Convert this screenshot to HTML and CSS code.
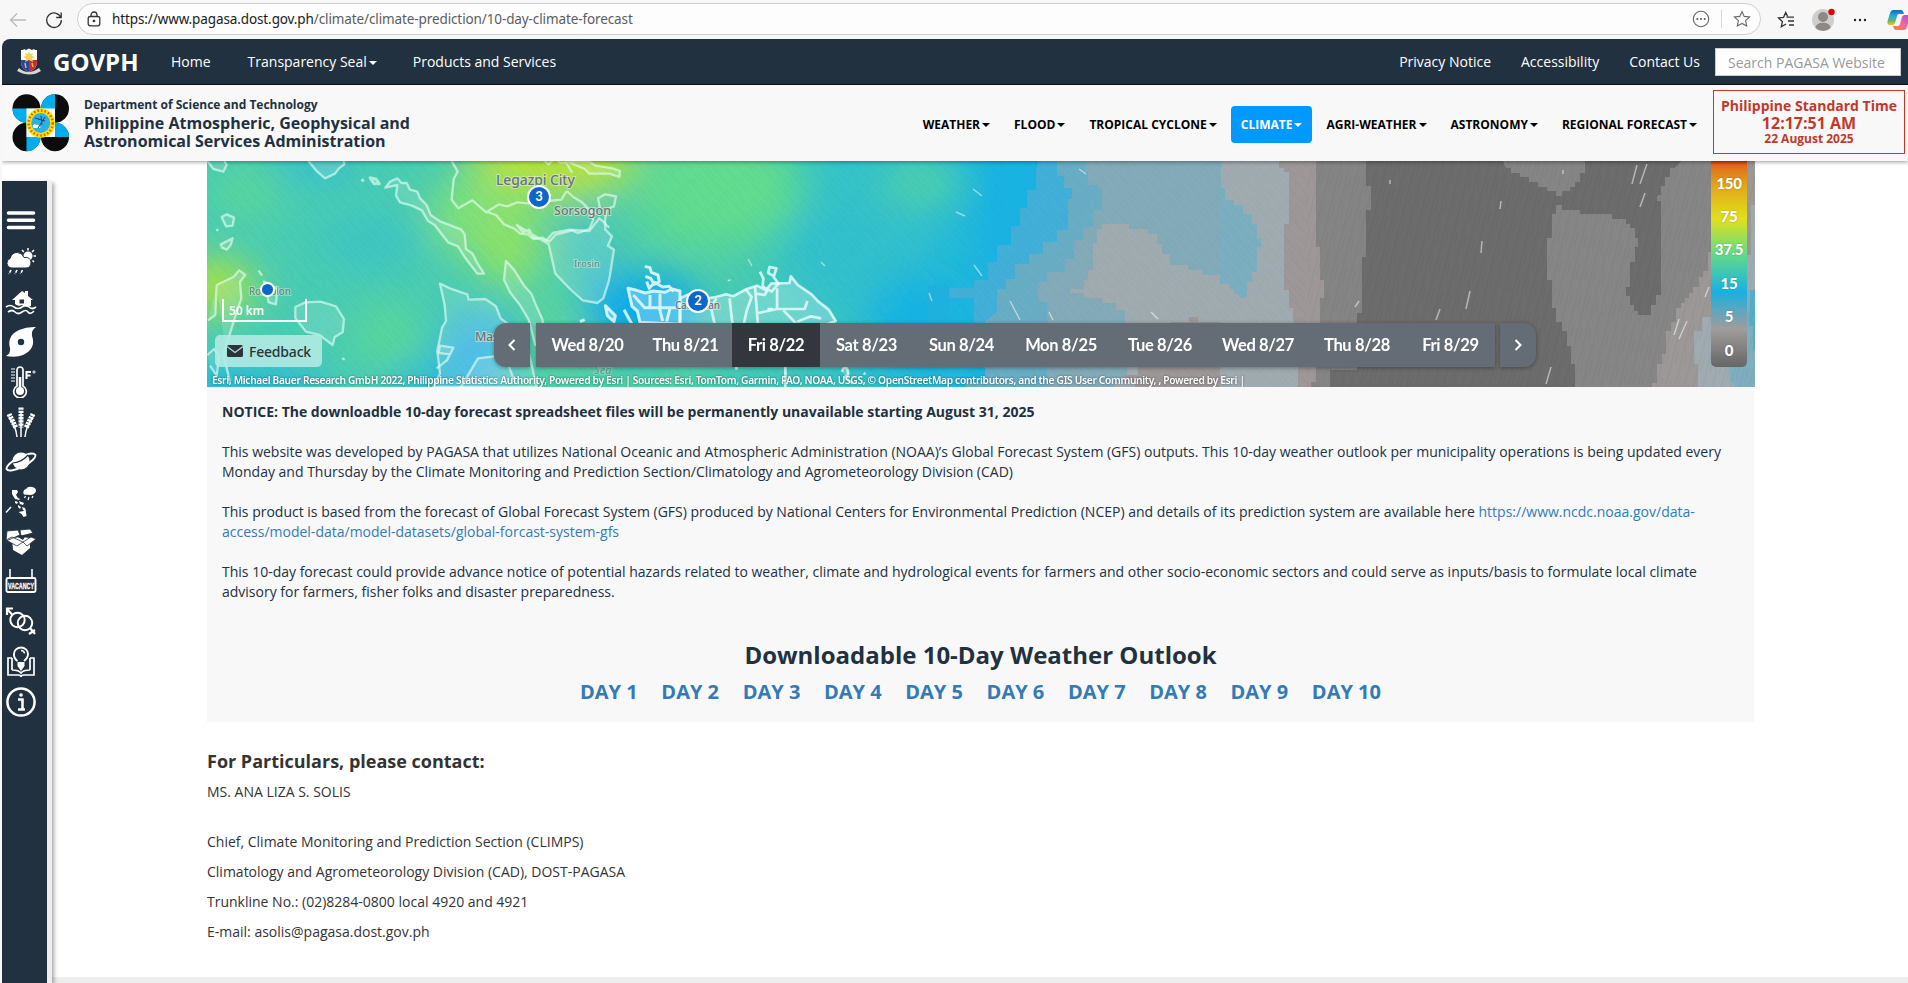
FILE: index.html
```html
<!DOCTYPE html>
<html lang="en">
<head>
<meta charset="utf-8">
<title>PAGASA</title>
<link rel="stylesheet" href="styles.css">
</head>
<body>
<div class="browser">
  <svg class="ico back" width="18" height="18" viewBox="0 0 18 18"><path d="M17 9H1.500M8 2.500 1.500 9 8 15.500"/></svg>
  <svg class="ico reload" width="18" height="18" viewBox="0 0 18 18"><path d="M15.800 6.500A7.300 7.300 0 1 0 16.300 9M16.200 1.500v5h-5"/></svg>
  <div class="address">
    <svg class="ico lock" width="14" height="16" viewBox="0 0 14 16"><rect x="1.200" y="5.500" width="11.600" height="9.300" rx="2"/><path d="M4 5.500V4a3 3 0 0 1 6 0v1.500"/><circle cx="7" cy="10" r=".7" fill="#333"/></svg>
    <span class="url">https://www.pagasa.dost.gov.ph<span>/climate/climate-prediction/10-day-climate-forecast</span></span>
    <svg class="ico more" width="18" height="18" viewBox="0 0 18 18"><circle cx="9" cy="9" r="7.700"/><g fill="#555" stroke="none"><circle cx="5.300" cy="9" r="1"/><circle cx="9" cy="9" r="1"/><circle cx="12.700" cy="9" r="1"/></g></svg>
    <i class="sep"></i>
    <svg class="ico star" width="18" height="18" viewBox="0 0 18 18"><path d="m9 1.500 2.200 4.900 5.400.6-4 3.700 1.100 5.300L9 13.400 4.300 16l1.100-5.300-4-3.700 5.400-.6z"/></svg>
  </div>
  <svg class="ico fav" width="18" height="18" viewBox="0 0 18 18"><path d="M9.500 6.200H17M11 10h6M12 14h5M9 13 4.300 15.800l1.100-5.200-4-3.700 5.200-.6L8.700 1.500l1.800 3.700"/></svg>
  <svg class="avatar" width="26" height="26" viewBox="0 0 26 26"><circle cx="12" cy="14" r="11" fill="#d0cecc"/><circle cx="12" cy="11" r="5" fill="#8e8987"/><path d="M4.500 22c0-7 15-7 15 0a11 11 0 0 1-15 0" fill="#8e8987"/><circle cx="20.500" cy="6" r="3.200" fill="#e60000"/></svg>
  <svg class="dots" width="14" height="4" viewBox="0 0 14 4"><circle cx="2" cy="2" r="1.200"/><circle cx="7" cy="2" r="1.200"/><circle cx="12" cy="2" r="1.200"/></svg>
  <svg class="copilot" width="23" height="22" viewBox="0 0 23 22"><defs><linearGradient id="ca" x1="0" y1="0" x2="0" y2="1"><stop offset="0" stop-color="#1269c7"/><stop offset=".4" stop-color="#25a9e0"/><stop offset=".7" stop-color="#5cb86a"/><stop offset="1" stop-color="#f6c32c"/></linearGradient><linearGradient id="cb" x1="1" y1="0" x2="0" y2="1"><stop offset="0" stop-color="#a44de8"/><stop offset=".5" stop-color="#f06a9c"/><stop offset="1" stop-color="#f7812f"/></linearGradient></defs><path d="M6 1h8q2 0 3 4h-5q-1.500 0-2 2L8 14q-.6 2-2.500 2H2.500Q-.4 16 .6 12L3 4Q4 1 6 1" fill="url(#ca)"/><path d="M17 21H9q-2 0-3-4h5q1.500 0 2-2l2-7q.6-2 2.500-2h3q3 0 2 4l-2.500 8q-1 3-3 3" fill="url(#cb)"/></svg>
</div>

<div class="page">
  <nav class="topnav">
    <svg class="seal" width="26" height="27" viewBox="0 0 26 27"><path d="M3 20q9 8 20 0l2 3q-11 7-24 0z" fill="#d9d4d4"/><path d="M5 2h16v12q0 7-8 10-8-3-8-10z" fill="#fff"/><path d="M5 12h8v12q-8-3-8-10z" fill="#2446a5"/><path d="M13 12h8v2q0 7-8 10z" fill="#c92b35"/><path d="m13 3 1.200 3L17 5l-1 3 3 1-3 1.500L17 14l-4-2-4 2 1-3.500L7 9l3-1-1-3 2.800 1z" fill="#f4cf54"/><path d="m9 15 1 5M16 15l1 4" stroke="#e8b83a" stroke-width="1.500"/><path d="m5 4 3-3 2 1 3-1.500L16 2l2-1 3 3" fill="#fff"/></svg>
    <b class="gov">GOVPH</b>
    <a class="n1">Home</a><a class="n2">Transparency Seal<i class="caret"></i></a><a class="n3">Products and Services</a>
    <span class="grow"></span>
    <a class="n4">Privacy Notice</a><a class="n5">Accessibility</a><a class="n6">Contact Us</a>
    <div class="search">Search PAGASA Website</div>
  </nav>
  <header class="head">
    <svg class="logo" width="58" height="58" viewBox="0 0 58 58">
      <g fill="#0c0c0c"><ellipse cx="14.500" cy="14.500" rx="14" ry="14.300"/><ellipse cx="43" cy="14.500" rx="14" ry="14.300"/><ellipse cx="14.500" cy="43" rx="14" ry="14.300"/><ellipse cx="43" cy="43" rx="14" ry="14.300"/></g>
      <g fill="#00aeef"><path d="M.5 14.500h28a14 14.300 0 0 1-28 0M43 .2v28.600A14 14.300 0 0 1 43 .2M29 43h28a14 14.300 0 0 0-28 0M14.500 28.700v28.600a14 14.300 0 0 0 0-28.600"/></g>
      <path d="M14.500 14.500h28.500v28.500h-28.500z" fill="#fff"/>
      <ellipse cx="28.700" cy="29" rx="14.300" ry="14.800" fill="#ffe600"/><ellipse cx="28.700" cy="29" rx="12" ry="12.500" fill="none" stroke="#e4572a" stroke-width="2.600" stroke-dasharray="1.600 2"/><ellipse cx="28.700" cy="29" rx="9.500" ry="10" fill="#27b3e8"/><path d="M20.500 32q1.500-3 4-1 3-1 4 3h-7z" fill="#fff"/><path d="m23 24 10 3m-7 7 7-11m-4-1 1 9" stroke="#246" fill="none"/></svg>
    <div class="agency"><div class="dept">Department of Science and Technology</div><div class="name">Philippine Atmospheric, Geophysical and<br>Astronomical Services Administration</div></div>
    <div class="menu">
      <a>WEATHER<i class="caret"></i></a><a>FLOOD<i class="caret"></i></a><a>TROPICAL CYCLONE<i class="caret"></i></a><a class="on">CLIMATE<i class="caret"></i></a><a>AGRI-WEATHER<i class="caret"></i></a><a>ASTRONOMY<i class="caret"></i></a><a>REGIONAL FORECAST<i class="caret"></i></a>
    </div>
    <div class="pst"><div class="t1">Philippine Standard Time</div><div class="t2">12:17:51 AM</div><div class="t3">22 August 2025</div></div>
  </header>

  <div class="body">
    <aside class="side">
      <svg viewBox="0 0 32 32"><path d="M3.500 7h25M3.500 14.300h25M3.500 21.500h25" stroke-width="3.600" stroke-linecap="round"/></svg>
      <svg viewBox="0 0 32 32"><circle cx="23" cy="10" r="4.500" fill="#fff" stroke="none"/><path d="M23 2v2.500M17 4l1.800 2M29 4l-2 2M31 10h-2.500M29 16l-1.500-1.500" stroke-width="1.500"/><path d="M6 22a5 5 0 0 1-1-9.500Q7 6 12.500 6.500q5 .5 6.500 5 6-1 7 4.500 0 6-5 6z" fill="#fff" stroke="#22313f" stroke-width="1"/><path d="m6 24-2 4M12 24l-2 4M17.500 24l-2 4" stroke-width="1.600" stroke-dasharray="3 1"/></svg>
      <svg viewBox="0 0 32 32"><path d="m7 14 10-9 3 2V5h3v5l5 4h-2v6q-5 2-9-1-4 2-7-1v-4z" fill="#fff" stroke="none"/><path d="M14.500 13.500h4.500v4h-4.500z" fill="#22313f" stroke="none"/><path d="M1 21q4-3 8 0t8 0 7 0 7 0M3 26q4-3 7 0t7 0 6 0 6-1" stroke-width="1.700"/></svg>
      <svg viewBox="0 0 32 32"><path d="M31 1Q22 .5 14 4C5 8 3 15 5 22q1 5-4 8 10 2 17-1c9-4 12-11 9-19q-1-6 4-9" fill="#fff" stroke="none"/><circle cx="16" cy="16" r="3.200" fill="#22313f" stroke="none"/></svg>
      <svg viewBox="0 0 32 32"><path d="M12 20V4a3 3 0 0 1 6 0v16a6.300 6.300 0 1 1-6 0z" stroke-width="1.700"/><circle cx="15" cy="25" r="4" fill="#fff" stroke="none"/><path d="M15 11v12" stroke-width="2.600"/><path d="M6 3h4M6 6h4M6 9h4M6 12h4M6 15h4" stroke-width="1.200"/><path d="M21.500 13V6H26M21.500 9.500h4" stroke-width="2"/><circle cx="29" cy="6" r="1.100" stroke-width="1"/></svg>
      <svg viewBox="0 0 32 32"><path d="M16 5v26M4 11q7 9 8 20M28 11q-7 9-8 20" stroke-width="1.500"/><path d="M16 1.500v20M4 8l7 14M28 8l-7 14" stroke-width="5" stroke-dasharray="2.300 .9"/></svg>
      <svg viewBox="0 0 32 32"><ellipse cx="16" cy="15" rx="8.500" ry="8.500" fill="#fff" stroke="none"/><ellipse cx="16" cy="16" rx="16" ry="5" transform="rotate(-27 16 16)" stroke-width="1.900"/><path d="M8 17q9-1 15-8" stroke="#22313f" stroke-width="1.200"/></svg>
      <svg viewBox="0 0 32 32"><g fill="#fff" stroke="none"><path d="M7 4h5l1 2-2 3 2 3 2 1-1 1-4-1-3-5zM10 15l3 1-1 2-2-1zM14 15l5 2-1 2-3-1zM13 19l3 2-1 2-2-2zM17 21l3 1 1 3-3-1zM13.500 26l5-1 2-2 1 7-3 1-2-3z"/><path d="M19 8.500a3.500 3.500 0 0 1 2-5.500q2-3 6-2 4 .5 4 4-1 3-5 4z"/></g><path d="m1 26.500 5-5.500" stroke-width="1.500"/><path d="m20.500 10-1 2M24 11l-1 3M28 10l-1 2" stroke-width="1.200"/></svg>
      <svg viewBox="0 0 32 32"><path d="m7 12 9-1 9 1v10l-8 7-9-5z" fill="#fff" stroke="none"/><path d="m2 5 11-1 2 5-14 6zM15 4l10-1 3 4-12 3zM1 14l6-3 11 5-6 4zM18 16l8-5 5 2-9 7z" fill="#fff" stroke="#22313f" stroke-width=".8"/><path d="m11 10 10-1-3 5z" fill="#22313f" stroke="none"/></svg>
      <svg viewBox="0 0 32 32"><path d="M5 3v9M27 3v9" stroke-width="1.600"/><rect x="1.500" y="12" width="29" height="14" rx="1.500" stroke-width="1.900"/><text x="3" y="22.500" textLength="26" lengthAdjust="spacingAndGlyphs" class="vac">VACANCY</text></svg>
      <svg viewBox="0 0 32 32"><circle cx="12.500" cy="14" r="7.200" stroke-width="2"/><circle cx="20" cy="17" r="7.200" stroke-width="2"/><path d="M7.500 9 2 3M2 9V2.500H8M25 22l5 6M24 28l6-4" stroke-width="2.200"/></svg>
      <svg viewBox="0 0 32 32"><path d="M7 12H3v17h10q3 0 3 2 0-2 3-2h10V12h-4M7 24V12M25 24V12M7 24q7 0 9 3 2-3 9-3" stroke-width="1.700"/><path d="M12.500 15q-4-3-3.500-7a7 6.500 0 0 1 14 0q0 4-4 7" stroke-width="1.900"/><path d="M12.500 16h7v4l-3.500 5-3.500-5z" fill="#fff" stroke="none"/><path d="M16 4.500a3.500 3.500 0 0 1 3.500 3" stroke-width="1.400"/></svg>
      <svg viewBox="0 0 32 32"><circle cx="16" cy="16" r="13.600" stroke-width="2.500"/><path d="M13 13.500h4.500V23M13 23.500h7" stroke-width="2.600"/><circle cx="16" cy="9" r="1.800" fill="#fff" stroke="none"/></svg>
    </aside>

    <main class="main">
      <div class="map">
        <svg class="raster" width="1548" height="226" viewBox="0 0 1548 226">
          <defs>
            <linearGradient id="base"><stop offset="0" stop-color="#49ccb4"/><stop offset=".19" stop-color="#4acdb0"/><stop offset=".31" stop-color="#55d2a0"/><stop offset=".39" stop-color="#38c5c2"/><stop offset=".46" stop-color="#2fbfcf"/><stop offset=".51" stop-color="#19b3e2"/><stop offset="1" stop-color="#19b3e2"/></linearGradient>
            <filter id="soft" filterUnits="userSpaceOnUse" x="-80" y="-80" width="1100" height="390"><feGaussianBlur stdDeviation="19"/></filter>
            <pattern id="hatch" width="9" height="30" patternUnits="userSpaceOnUse" patternTransform="rotate(14)"><path d="M3 0v30M6.500 8v14" stroke="#000" stroke-opacity=".045"/></pattern>
            <pattern id="hatch2" width="9" height="30" patternUnits="userSpaceOnUse" patternTransform="rotate(-42)"><path d="M3 0v30M6.500 8v14" stroke="#046" stroke-opacity=".045"/></pattern>
          </defs>
          <rect width="1548" height="226" fill="url(#base)"/>
          <g filter="url(#soft)">
            <ellipse cx="345" cy="0" rx="85" ry="40" fill="#b4e23c"/><ellipse cx="270" cy="55" rx="50" ry="40" fill="#7fe07c"/><ellipse cx="302" cy="85" rx="36" ry="42" fill="#8de268"/>
            <ellipse cx="8" cy="125" rx="42" ry="28" fill="#a9e244"/><ellipse cx="40" cy="32" rx="36" ry="25" fill="#5cd79a"/><ellipse cx="110" cy="4" rx="45" ry="14" fill="#30bbd4"/>
            <ellipse cx="165" cy="80" rx="55" ry="28" fill="#3cc5c3"/><ellipse cx="180" cy="175" rx="34" ry="33" fill="#5ad79a"/>
            <ellipse cx="270" cy="190" rx="36" ry="40" fill="#38b4e8"/><ellipse cx="345" cy="170" rx="26" ry="40" fill="#5cd49c"/>
            <ellipse cx="385" cy="85" rx="28" ry="45" fill="#43c5bd"/><ellipse cx="440" cy="150" rx="62" ry="42" fill="#10abea"/>
            <ellipse cx="515" cy="28" rx="80" ry="55" fill="#62dc8e"/><ellipse cx="715" cy="22" rx="42" ry="26" fill="#50d0aa"/>
            <ellipse cx="565" cy="170" rx="35" ry="60" fill="#3ec8bb"/><ellipse cx="640" cy="90" rx="60" ry="50" fill="#30c0cc"/><ellipse cx="715" cy="165" rx="55" ry="55" fill="#19b3e2"/>
            <ellipse cx="30" cy="230" rx="90" ry="24" fill="#28b8dd"/><ellipse cx="230" cy="225" rx="50" ry="18" fill="#26b6df"/><ellipse cx="520" cy="222" rx="40" ry="16" fill="#40c9b8"/>
          </g>
          <g transform="matrix(.34435 0 0 .33333 473 -6)" shape-rendering="crispEdges">
            <path d="M1040 10h560v700H900v-170l-45-40V430h-75v70h-60v-110h60v10h75V375h40v-55h27v-50h38v-56h27v-56h20v-54h26V60z" fill="#42afd8"/>
            <path d="M720 390h60v110h-60z" fill="#1fb1de"/>
            <path d="M1095 10h480v700H830v-30h55V500l35-30v-68h27v-30h26v-46h40v-28h40v-38h42v-36h32v-92h11v-34h-22V64h-21z" fill="#69adc5"/>
            <path d="M1175 10h420v700H1065V440h-26v-60h26v-30h53v-38h26v-56h27v-40h28v-50h27v-65h-12V90h-28V50h-11z" fill="#83aab8"/>
            <path d="M1226 208h78v14h55v15h25v30h15v30h25v32h52v15h40v15h56v351h-310v-30h35v-70h-5V465h-27v-22h-40v-14h-53v-14h-40v-13h40v-28h13v-28h13V264h14v-42h12z" fill="#a0abb0"/>
            <path d="M1477 486h28v15h67v209h-252v-30h-30v-20h40v-120h95v-38h52z" fill="#9d9797"/>
          </g>
          <g transform="matrix(.35714 0 0 .33333 1013 -6)" shape-rendering="crispEdges">
            <path d="M0 10h290v700H0z" fill="#a0abb0"/><path d="M286 10h1212v700H286z" fill="#848484"/>
            <path d="M0 10h3v88h11v36h25v15h25v27h26v30h14v42h11v27h-11v77h-14v28h-13v42h-8v8H54v-13H40v-16H26v-14H0z" fill="#7baebf"/>
            <path d="M166 10h124v700H218V628h-13V460h-12v-56h-14V208h14V52h-15V38h-12z" fill="#9d9797"/>
            <path d="M269 10h170v700H256v-28h13V540h11V430h14v-56h-14v-98h-11z" fill="#848484"/>
            <path d="M409 10h890v35h-14v20h-12v28h-13v28h-33v15h11v574H308v-65h77V475h13V306h11V165h14V93h-14z" fill="#6c6c6c"/>
            <path d="M790 10h233v45h-15v25h-14v15h-14v13h-22v15h-16v-15h-25V95h-26V81h-26V67h-24V53h-27V38h-14z" fill="#858585"/>
            <path d="M1299 10h199v700H994V628h-10v-56h-13v-43h-13v-28h-16v-42h-13v-85h-13V249h14v-71h11v-28h16v15h50v12h90v14h40v15h12v14h12v28h10v28h-10v44h-13v75h-12v28h12v28h12v16h10v12h38v-30h14v-28h14V137h-13v-15h12V93h12V65h14V38h13z" fill="#868686"/>
            <path d="M1480 10h18v700h-288v-27h14v-55h14v-30h12v-70h14v-28h14v-42h12v-14h12v-15h10v-14h13v-20h15v-28h12v-20h14v-55h15z" fill="#9c9898"/>
            <path d="M1338 710v-82h-12V528h25v-42h26V300h110V150h11v560z" fill="#9fabb0"/><path d="M1440 710v-28h-13v-54h35V404h36v306z" fill="#7eaebf"/><path d="M1485 404h13v180h-5v-70h-13v-40h5z" fill="#55aec9"/>
          </g>
          <rect width="870" height="226" fill="url(#hatch2)"/><rect x="870" width="230" height="226" fill="url(#hatch2)"/><rect x="1100" width="448" height="226" fill="url(#hatch)"/>
          <!-- coastlines and municipal borders -->
          <g transform="matrix(.33333 0 0 .33333 -7 -6)" fill="#fff" fill-opacity=".13" stroke="#e5fff5" stroke-opacity=".62" stroke-width="7" stroke-linejoin="round">
            <path d="M20 15 40 42 70 50 80 30 72 15M325 18l25 30 25 22 30-14 12-16 16-12-2-16"/>
            <path d="M485 72l6 8M510 68l18 4 10 14-16 0z" stroke-width="9"/>
            <path d="m556 98 14-18 22-10 12 14 16 0 10 20 22 6 8 20 20 20 12 30 30 20 22 8 40 16 10 14 4 44 20 14 12 25 22 35-20 0-38-50-20-32-30-12-40-52-20-12-18-32-30-14-36-10-12-20 4-32z"/>
            <path d="M65 186 80 178 102 188 98 212 78 214zM62 268 98 250 92 270 80 284 66 278zM50 222l4 6"/>
            <path fill="none" d="m755 18 18 32-12 22-6 62 20 26 42-24 42 36 38-24 25 6 30-12 40 4M858 170l30 10 24 28 30 12 18 16 24 2 16 14 28-4 20 12 18-20 50-14 18 8 34-12 12-28-10-26"/>
            <path fill="none" d="M1015 18l10-8 20 18 20-18 14 12 20 2 18 30M1100 108l-16 26-40 4M1100 108l20 18 26 16 24 24 30 14M1200 160l-6-30 22-12 32 6-6 30-22 8-6 44 14 12"/>
            <path d="M1098 18l70 2 20 12 50 8 22 8-2 18-30-10-60 0-14-14zM950 210l18 22 20-8 12 24 40 8 18-22 50-10 60 4 30-38 18 14 0 20 20 20-12 28 18 12-12 76-4 20-16 50-18 14-44-8-38-34-44-46-20-88z"/>
            <path d="m918 318 24 26 32 50 20 22 12 30 20 44 20 80h-40l-20-76-26-44-30-38-18-38zM720 386l30 14 52 18 4 16 50-2 32 22 14 36 40 30 38 44 30 132H700l20-40-8-68 14-70 12-20-4-48z"/>
            <path d="m710 640 30-24 10-18-34-4 4-22 40 6-20 40M780 700l54-90 80-10 30 80"/>
            <path d="M50 390 100 366 118 346 136 360 120 380 124 430 104 490 70 600 90 680M50 390l-4 90-22 16M176 346l10 16M192 380l40 20-4 48-22-6z"/>
            <path d="m286 456 30-14 46-2 46 14 24 38-4 40-24 14-6 24-40-30-40-10-32-40zM22 600l20-18 16 20-8 60-20-30M426 610l8 4"/>
          </g>
          <g transform="matrix(.33333 0 0 .33333 -7 -6)" fill="#dff6ff" fill-opacity=".3" stroke="#eafcff" stroke-opacity=".85" stroke-width="9" stroke-linejoin="round">
            <path d="m1284 400 12 54 16 14 8 34 120 6v-100l-24-6-22 10-34-4-24 6-26-8z"/>
            <path fill="none" d="m1334 334 16 4 4 14 20 8 4 20-16 8-10-18-16-6M1340 380l8 20 16-18 24 14 20-2 12 16M1300 420l34 38h44l10 40M1350 420v36M1380 416v42h50M1400 500l10-40"/>
            <path d="m1216 452 30 30-4 18-20-18zM1272 464l24 44M1140 500l14-6"/>
          </g>
          <g transform="matrix(.34435 0 0 .33333 473 -6)" fill="#fff" fill-opacity=".25" stroke="#eafcff" stroke-opacity=".8" stroke-width="8" stroke-linejoin="round">
            <path d="m0 430 30-14 50 14 24-4 30-8 20 6 40-22 30-10 26 14 14-20 54-2 4-20 20 26 40 28 20 22 30 24 20 34-30 12H0z"/>
            <path fill="none" d="M144 430l8 74M190 402l18 24-14 40-8 38M218 396l8 108M220 416l26 4 8-14M282 400v62l-54 12M282 462h80l8-24M300 466l36 38M340 500l40-16 30 6M100 504l-10-46 16-28"/>
            <path fill="none" d="m232 350 10 20-2 24 26 16 20-24-14-20 8-26-20-4-4 18 14 8M254 462h16"/>
            <path d="m142 374 1 4M164 636v8M306 636v70M470 650q10-24 16-6t-4 20 20 20M534 654l4 4"/>
          </g>
          <g stroke="#fff" stroke-opacity=".5" stroke-width="1.500"><path d="m766 28 9 7M749 51l9 4M767 104l8 11M722 132l3 8M803 140l10 19M842 151l4 8M944 151l7 7M872 8l7 5M541 98l4 7M614 101l4 4M1183 19v4M1294 40l-1 8M1275 80l-1 12M1263 130l-4 18M1233 148l-4 11M1430 4l-5 19M1440 3l-7 20M1438 32l-5 14M1356 9v4M1152 140l-4 6M1502 126l-4 10M1472 158l-5 16M1480 160l-8 18M1344 206l-5 17"/></g>
          <g class="place"><text x="289" y="24" textLength="79" font-size="14">Legazpi City</text><text x="347" y="54" textLength="57" font-size="12.500">Sorsogon</text><text x="367" y="106" textLength="26" font-size="9.500" opacity=".7">Irosin</text><text x="42" y="134" textLength="42" font-size="10" opacity=".7">Romblon</text><text x="268" y="180" textLength="48" font-size="12.500">Masbate</text><text x="468" y="148" textLength="45" font-size="10">Catarman</text><text x="387" y="213" font-size="11" font-style="italic" opacity=".5">Sea</text></g>
          <g fill="#0d66c9" stroke="#fff" stroke-width="2"><circle cx="332" cy="36" r="11"/><circle cx="491" cy="140" r="11"/><circle cx="60.500" cy="128.500" r="6.500"/></g>
          <g class="mark"><text x="332" y="40">3</text><text x="491" y="144">2</text></g>
          <path d="M16 138v22h83v-22" fill="none" stroke="#fff" stroke-width="2"/><text x="22" y="154" class="km" textLength="35">50 km</text>
        </svg>
        <div class="feedback"><svg width="16" height="12" viewBox="0 0 16 12"><rect width="16" height="12" rx="1.500" fill="#2b333c"/><path d="m0 1.500 8 6 8-6" fill="none" stroke="#a4e4dd" stroke-width="1.300"/></svg>Feedback</div>
        <div class="timeline">
          <span class="arrow prev"><svg width="8" height="12" viewBox="0 0 8 12"><path d="M6.500 1 1.500 6l5 5"/></svg></span>
          <div class="tabs"><span style="width:103px">Wed 8/20</span><span style="width:93px">Thu 8/21</span><span class="sel" style="width:88px">Fri 8/22</span><span style="width:93px">Sat 8/23</span><span style="width:97px">Sun 8/24</span><span style="width:102px">Mon 8/25</span><span style="width:96px">Tue 8/26</span><span style="width:100px">Wed 8/27</span><span style="width:98px">Thu 8/28</span><span style="width:89px">Fri 8/29</span></div>
          <span class="arrow next"><svg width="8" height="12" viewBox="0 0 8 12"><path d="m1.500 1 5 5-5 5"/></svg></span>
        </div>
        <div class="legend"><span>150</span><span>75</span><span>37.5</span><span>15</span><span>5</span><span>0</span></div>
        <svg class="credits" width="1040" height="16"><text x="1" y="12" textLength="1033">Esri, Michael Bauer Research GmbH 2022, Philippine Statistics Authority, Powered by Esri | Sources: Esri, TomTom, Garmin, FAO, NOAA, USGS, © OpenStreetMap contributors, and the GIS User Community, , Powered by Esri |</text></svg>
      </div>
      <section class="panel">
        <p><b>NOTICE: The downloadble 10-day forecast spreadsheet files will be permanently unavailable starting August 31, 2025</b></p>
        <p>This website was developed by PAGASA that utilizes National Oceanic and Atmospheric Administration (NOAA)’s Global Forecast System (GFS) outputs. This 10-day weather outlook per municipality operations is being updated every Monday and Thursday by the Climate Monitoring and Prediction Section/Climatology and Agrometeorology Division (CAD)</p>
        <p>This product is based from the forecast of Global Forecast System (GFS) produced by National Centers for Environmental Prediction (NCEP) and details of its prediction system are available here <a>https://www.ncdc.noaa.gov/data-<br>access/model-data/model-datasets/global-forcast-system-gfs</a></p>
        <p>This 10-day forecast could provide advance notice of potential hazards related to weather, climate and hydrological events for farmers and other socio-economic sectors and could serve as inputs/basis to formulate local climate advisory for farmers, fisher folks and disaster preparedness.</p>
        <h2>Downloadable 10-Day Weather Outlook</h2>
        <div class="days"><a>DAY 1</a><a>DAY 2</a><a>DAY 3</a><a>DAY 4</a><a>DAY 5</a><a>DAY 6</a><a>DAY 7</a><a>DAY 8</a><a>DAY 9</a><a>DAY 10</a></div>
      </section>
      <section class="contact">
        <h3>For Particulars, please contact:</h3>
        <p class="who">MS. ANA LIZA S. SOLIS</p>
        <p>Chief, Climate Monitoring and Prediction Section (CLIMPS)</p>
        <p>Climatology and Agrometeorology Division (CAD), DOST-PAGASA</p>
        <p>Trunkline No.: (02)8284-0800 local 4920 and 4921</p>
        <p>E-mail: asolis@pagasa.dost.gov.ph</p>
      </section>
      <div class="foot"></div>
    </main>
  </div>
</div>
</body>
</html>
```
FILE: styles.css
```css
* { box-sizing: border-box; }
body { margin: 0; width: 1908px; height: 983px; overflow: hidden; background: #f7f7f7; font: 14px/20px "Open Sans", sans-serif; color: #333; }
.browser { display: flex; align-items: center; height: 39px; padding-left: 9px; }
.ico { fill: none; stroke: #333; stroke-width: 1.3; flex: none; }
.back { stroke: #bbb; }
.reload { margin-left: 18px; }
.address { display: flex; align-items: center; flex: none; width: 1684px; height: 32px; margin: -1px 0 0 14px; padding-left: 9px; border: 1px solid #cfcfcf; border-radius: 16px; background: #fdfdfd; }
.url { flex: 1; margin-left: 11px; font: 13.5px/20px "Noto Sans", sans-serif; color: #1b1b1b; letter-spacing: -.11px; }
.url span { color: #5c5c5c; }
.more, .star { stroke: #666; stroke-width: 1.1; }
.sep { width: 1px; height: 18px; margin: 0 11px; background: #d8d8d8; }
.star { margin-right: 9px; }
.fav { margin-left: 16px; }
.avatar { margin: -2px 0 0 16px; flex: none; }
.dots { margin-left: 16px; fill: #222; flex: none; }
.copilot { margin-left: 20px; flex: none; }

.page { height: 944px; margin-left: 2px; background: #fff; border-radius: 8px 0 0 0; overflow: hidden; }
.topnav { display: flex; align-items: center; height: 46px; padding: 0 7px 0 14px; background: #22313f; border-bottom: 1px solid #111; color: #fff; }
.seal { flex: none; }
.gov { width: 118px; margin-left: 11px; font-size: 24px; line-height: 44px; }
.topnav a { white-space: nowrap; }
.n2 { margin-left: 37px; }
.n3 { margin-left: 36px; }
.grow { flex: 1; }
.n5, .n6 { margin-left: 30px; }
.search { width: 186px; height: 28px; margin-left: 15px; padding-left: 12px; border: 1px solid #ccc; background: #fff; color: #999; line-height: 28px; white-space: nowrap; }
.caret { display: inline-block; margin-left: 2px; vertical-align: middle; border: 4px solid transparent; border-top-color: currentColor; border-bottom: 0; }

.head { position: relative; z-index: 2; display: flex; align-items: center; height: 76px; padding: 0 3px 0 10px; background: #f8f8f8; box-shadow: 0 1px 4px rgba(0,0,0,.4); }
.agency { margin: -2px 0 0 14px; font-weight: 700; color: #22313f; white-space: nowrap; }
.dept { font-size: 12px; line-height: 19px; }
.name { font-size: 16px; line-height: 18px; }
.menu { display: flex; gap: 4px; margin: 2px 6px 0 auto; font-size: 12px; font-weight: 700; color: #000; white-space: nowrap; }
.menu a { height: 37px; padding: 0 10px; line-height: 37px; border-radius: 4px; }
.menu .on { background: #0099ff; color: #fff; }
.pst { width: 192px; height: 64px; margin-top: -3px; padding-top: 5px; border: 1px solid #c0392b; color: #c0392b; font-weight: 700; text-align: center; white-space: nowrap; }
.t1 { line-height: 19px; }
.t2 { font-size: 16px; line-height: 16px; }
.t3 { font-size: 12px; line-height: 15px; }

.body { display: flex; height: 822px; }
.side { display: flex; flex-direction: column; flex: none; gap: 8px; width: 50px; margin-top: 20px; padding: 25px 0 0 3px; background: #22313f; border-right: 5px solid #eee; box-shadow: 2px 2px 4px rgba(0,0,0,.35); z-index: 1; }
.side svg { width: 32px; height: 32px; flex: none; fill: none; stroke: #fff; }
.vac { font: bold 9.5px "Liberation Sans", sans-serif; fill: #fff; stroke: #fff; stroke-width: .3; }

.main { flex: 1; display: flex; flex-direction: column; }
.map { position: relative; flex: none; width: 1548px; height: 226px; margin-left: 155px; overflow: hidden; }
.raster { display: block; }
.place text { font-family: "Noto Sans", sans-serif; font-weight: 500; fill: #6a7475; stroke: #e7eee4; stroke-opacity: .6; stroke-width: 2px; paint-order: stroke; }
.mark text { font: 700 13px Lato, sans-serif; fill: #fff; text-anchor: middle; }
.km { font: 600 12px "Noto Sans", sans-serif; fill: #fff; }
.feedback { position: absolute; left: 8px; top: 174px; display: flex; align-items: center; width: 107px; height: 32px; padding-left: 12px; gap: 6px; border-radius: 5px; background: rgba(180,235,228,.88); color: #2b333c; font: 500 14px "Noto Sans", sans-serif; letter-spacing: -.2px; }
.timeline { position: absolute; left: 287px; top: 162px; display: flex; width: 1042px; height: 44px; color: #fff; filter: drop-shadow(0 1px 2px rgba(0,0,0,.35)); }
.arrow { display: flex; align-items: center; justify-content: center; width: 36px; background: #646c75; }
.arrow svg { fill: none; stroke: #fff; stroke-width: 2; }
.prev { margin-right: 6px; border-radius: 12px 0 0 12px; }
.next { margin-left: 5px; border-radius: 0 12px 12px 0; }
.tabs { display: flex; width: 959px; background: #646c75; font: 700 16.5px/44px Lato, sans-serif; letter-spacing: -.35px; }
.tabs span { text-align: center; white-space: nowrap; flex: none; }
.tabs .sel { background: #33373d; }
.legend { position: absolute; right: 8px; top: -80px; display: flex; flex-direction: column; justify-content: flex-end; width: 36px; height: 286px; border-radius: 5px; background: linear-gradient(#d03010 80px, #e06a1c 84px, #e0a81c 105px, #e0e01c 138px, #65dc85 172px, #19b0e2 211px, #a09c9c 248px, #666 286px); color: #fff; font: 900 15px/33.4px Lato, sans-serif; letter-spacing: -.3px; text-align: center; text-shadow: 0 0 2px rgba(0,0,0,.25); }
.credits { position: absolute; left: 4px; top: 211px; font: 600 10.2px "Noto Sans", sans-serif; fill: #fff; filter: drop-shadow(0 0 1px rgba(0,0,0,.5)); }

.panel { width: 1547px; height: 335px; margin-left: 155px; padding: 15px 15px 0; background: #f8f8f8; color: #22313f; }
.panel p { margin: 0 0 20px; }
.panel a { color: #337ab7; }
.panel h2 { margin: 38px 0 0; font-size: 24px; line-height: 30px; text-align: center; }
.days { display: flex; justify-content: center; gap: 23.6px; margin-top: 8px; font-size: 20px; font-weight: 700; line-height: 28px; white-space: nowrap; }
.contact { flex: 1; padding: 29px 0 0 155px; }
.contact h3 { margin: 0 0 11px; font-size: 18px; line-height: 20px; }
.contact p { margin: 0 0 10px; }
.contact .who { margin-bottom: 30px; }
.foot { height: 6px; background: #eee; }
```
